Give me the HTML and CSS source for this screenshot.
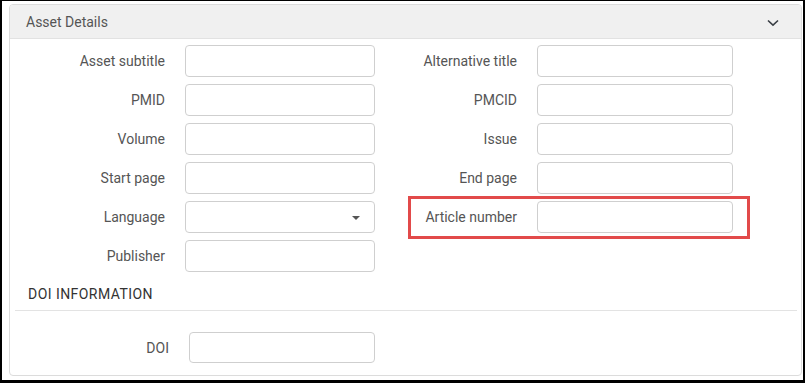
FILE: index.html
```html
<!DOCTYPE html>
<html>
<head>
<meta charset="utf-8">
<link rel="stylesheet" href="styles.css">
</head>
<body>
<div class="frame">
  <div class="panel">
    <div class="panel-header">
      <span class="panel-title">Asset Details</span>
      <svg class="chevron" width="12" height="8" viewBox="0 0 12 8"><path d="M1 1.5 L6 6.2 L11 1.5" fill="none" stroke="#3a3f45" stroke-width="1.6"/></svg>
    </div>
    <div class="panel-body">
      <div class="row">
        <div class="field left"><label class="lbl">Asset subtitle</label><div class="input"></div></div>
        <div class="field right"><label class="lbl">Alternative title</label><div class="input"></div></div>
      </div>
      <div class="row">
        <div class="field left"><label class="lbl">PMID</label><div class="input"></div></div>
        <div class="field right"><label class="lbl">PMCID</label><div class="input"></div></div>
      </div>
      <div class="row">
        <div class="field left"><label class="lbl">Volume</label><div class="input"></div></div>
        <div class="field right"><label class="lbl">Issue</label><div class="input"></div></div>
      </div>
      <div class="row">
        <div class="field left"><label class="lbl">Start page</label><div class="input"></div></div>
        <div class="field right"><label class="lbl">End page</label><div class="input"></div></div>
      </div>
      <div class="row">
        <div class="field left"><label class="lbl">Language</label><div class="input select"><span class="caret"></span></div></div>
        <div class="field right highlighted"><label class="lbl">Article number</label><div class="input"></div></div>
      </div>
      <div class="row">
        <div class="field left"><label class="lbl">Publisher</label><div class="input"></div></div>
      </div>
      <div class="section-title">DOI INFORMATION</div>
      <div class="section-body">
        <div class="field doi"><label class="lbl">DOI</label><div class="input"></div></div>
      </div>
    </div>
  </div>
</div>
</body>
</html>
```
FILE: styles.css
```css
*, *::before, *::after { box-sizing: border-box; }
html, body { margin: 0; padding: 0; background: #fff; }
body { font-family: Roboto, "Liberation Sans", sans-serif; font-size: 14px; color: #555; }

.frame {
  width: 805px;
  height: 383px;
  border-style: solid;
  border-color: #000;
  border-width: 1px 2px 3px 2px;
  padding: 3px 1px 4px 7px;
}

.panel {
  height: 100%;
  border: 1px solid #dcdcdc;
  border-radius: 4px;
  overflow: hidden;
}

.panel-header {
  height: 34px;
  background: #f0f0f0;
  border-bottom: 1px solid #e2e2e2;
  display: flex;
  align-items: center;
  justify-content: space-between;
  padding: 0 22px 0 16px;
}
.panel-title { color: #555; font-size: 14px; }
.chevron { display: block; margin-top: 3px; }

.panel-body {
  padding-top: 6px;
  display: flex;
  flex-direction: column;
}

.row {
  display: flex;
  height: 32px;
  margin-bottom: 7px;
}

.field { display: flex; align-items: center; position: relative; }
.lbl { text-align: right; color: #555; }
.input {
  height: 32px;
  border: 1px solid #cfcfcf;
  border-radius: 4px;
  background: #fff;
  margin-left: 20px;
  position: relative;
}
.left .lbl { width: 155px; }
.left .input { width: 190px; }
.right .lbl { width: 142px; }
.right .input { width: 196px; }

.select .caret {
  position: absolute;
  right: 14px;
  top: 14px;
  width: 0; height: 0;
  border-left: 4px solid transparent;
  border-right: 4px solid transparent;
  border-top: 4px solid #555;
}

.highlighted::after {
  content: "";
  position: absolute;
  left: 33px;
  top: -5px;
  width: 342px;
  height: 43px;
  border: 3px solid #e24a4a;
}

.section-title {
  margin-top: 6px;
  padding-left: 18px;
  color: #333;
  font-size: 14px;
  letter-spacing: 0.45px;
  line-height: 18px;
}

.section-body {
  margin: 7px 4px 0 5px;
  border-top: 1px solid #e3e3e3;
  padding-top: 21px;
}
.doi .lbl { width: 154px; }
.doi .input { width: 186px; height: 31px; }
```
